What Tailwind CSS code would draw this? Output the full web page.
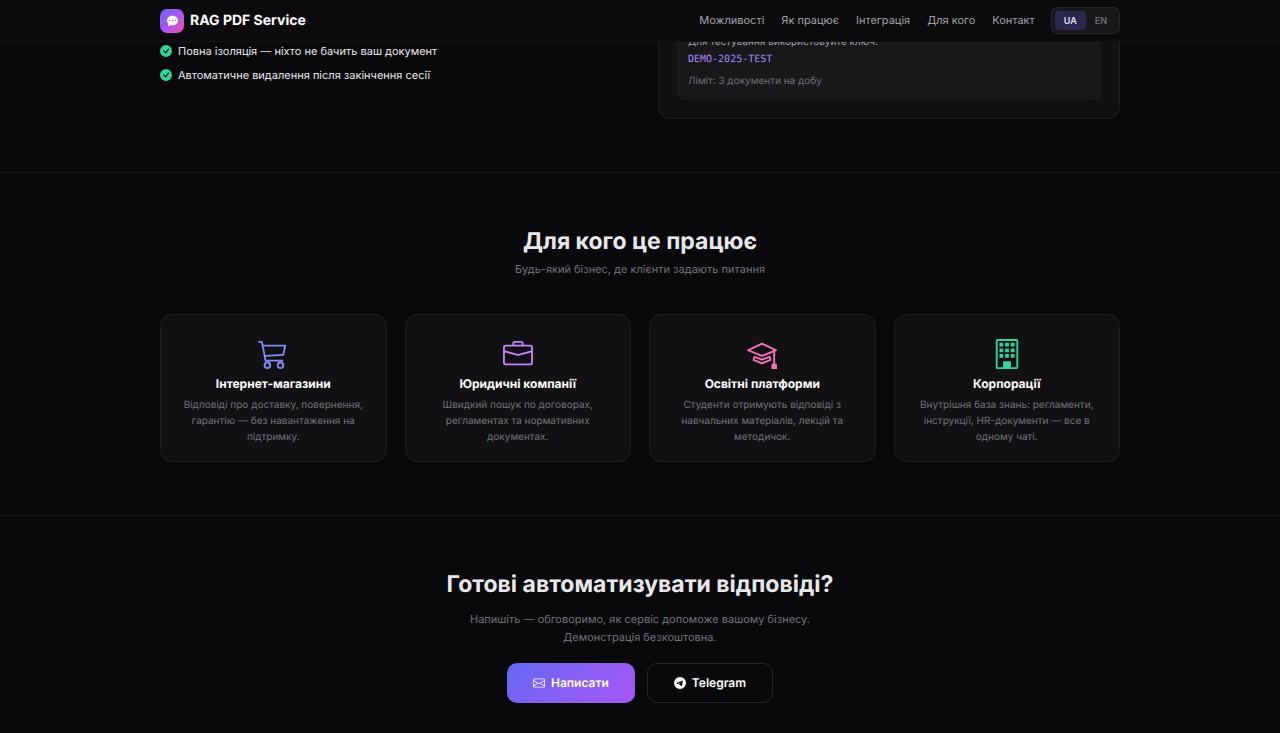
<!DOCTYPE html>
<html lang="uk">
<head>
    <meta charset="UTF-8">
    <meta name="viewport" content="width=device-width, initial-scale=1.0">
    <title>RAG PDF Service</title>
    <script src="https://cdn.jsdelivr.net/npm/@tailwindcss/browser@4"></script>
</head>
<body class="bg-[#09090b] text-[#e8e8ea] font-['Inter',sans-serif] text-xs [text-rendering:geometricPrecision] overflow-x-hidden">

    <!-- Header -->
    <header class="fixed top-0 inset-x-0 z-10 bg-[#0b0b0d] border-b border-[#141416]">
        <div class="max-w-[960px] mx-auto h-[41px] flex justify-between items-center">
            <a href="#" class="flex items-center gap-1.5 text-sm font-bold text-white">
                <span class="size-6 rounded-[7px] bg-linear-135 from-[#6366f1] via-[#a855f7] to-[#ec4899] flex items-center justify-center">
                    <svg class="size-[11px]" viewBox="0 0 16 16" fill="currentColor"><path d="M16 8c0 3.866-3.582 7-8 7a9 9 0 0 1-2.347-.306c-.584.296-1.925.864-4.181 1.234-.2.032-.352-.176-.273-.362.354-.836.674-1.95.77-2.966C.744 11.37 0 9.76 0 8c0-3.866 3.582-7 8-7s8 3.134 8 7M5 8a1 1 0 1 0-2 0 1 1 0 0 0 2 0m4 0a1 1 0 1 0-2 0 1 1 0 0 0 2 0m3 1a1 1 0 1 0 0-2 1 1 0 0 0 0 2"/></svg>
                </span>
                RAG PDF Service
            </a>
            <div class="flex items-center gap-4">
                <nav class="flex gap-[17px] text-[11px] text-[#a1a1aa]">
                    <a href="#features">Можливості</a>
                    <a href="#how">Як працює</a>
                    <a href="#integration">Інтеграція</a>
                    <a href="#audience">Для кого</a>
                    <a href="#contact">Контакт</a>
                </nav>
                <div class="flex rounded-md border border-[#262629] bg-[#18181b] p-[3px] text-[9px] leading-[19px] font-semibold">
                    <button type="button" class="rounded bg-[#2b2850] text-[#e4e4f5] px-[9px]">UA</button>
                    <button type="button" class="rounded text-[#6b6b73] px-[9px]">EN</button>
                </div>
            </div>
        </div>
    </header>

    <!-- Demo -->
    <section class="pb-[53px] border-b border-[#18181b]">
        <div class="max-w-[960px] mx-auto grid grid-cols-2 gap-9">
            <ul class="pt-[42px] space-y-1.5 text-[11px] leading-[18px] text-[#e8e8ea]">
                <li class="flex items-center gap-1.5">
                    <svg class="size-3 text-[#34d399]" viewBox="0 0 16 16" fill="currentColor"><path d="M16 8A8 8 0 1 1 0 8a8 8 0 0 1 16 0m-3.97-3.03a.75.75 0 0 0-1.08.022L7.477 9.417 5.384 7.323a.75.75 0 0 0-1.06 1.06L6.97 11.03a.75.75 0 0 0 1.079-.02l3.992-4.99a.75.75 0 0 0-.01-1.05z"/></svg>
                    Повна ізоляція — ніхто не бачить ваш документ
                </li>
                <li class="flex items-center gap-1.5">
                    <svg class="size-3 text-[#34d399]" viewBox="0 0 16 16" fill="currentColor"><path d="M16 8A8 8 0 1 1 0 8a8 8 0 0 1 16 0m-3.97-3.03a.75.75 0 0 0-1.08.022L7.477 9.417 5.384 7.323a.75.75 0 0 0-1.06 1.06L6.97 11.03a.75.75 0 0 0 1.079-.02l3.992-4.99a.75.75 0 0 0-.01-1.05z"/></svg>
                    Автоматичне видалення після закінчення сесії
                </li>
            </ul>
            <div class="rounded-b-xl border border-t-0 border-[#1f1f22] bg-[#111113] px-[18px] pb-[18px]">
                <div class="rounded-b-md bg-[#18181b] px-[11px] pt-[34px] pb-[11px] text-[10px] leading-4">
                    <p class="text-[#a1a1aa]">Для тестування використовуйте ключ:</p>
                    <code class="block mt-0.5 font-['DejaVu_Sans_Mono',monospace] text-[#a78bfa]">DEMO-2025-TEST</code>
                    <p class="mt-[5px] text-[#71717a]">Ліміт: 3 документи на добу</p>
                </div>
            </div>
        </div>
    </section>

    <!-- Audience -->
    <section id="audience" class="py-[53px] border-b border-[#18181b] text-center">
        <div class="max-w-[960px] mx-auto">
            <h2 class="text-[23px] leading-[30px] font-bold">Для кого це працює</h2>
            <p class="mt-1 text-[11px] leading-[18px] text-[#71717a]">Будь-який бізнес, де клієнти задають питання</p>
            <div class="mt-9 grid grid-cols-4 gap-[18px]">
                <article class="rounded-xl border border-[#1f1f22] bg-[#111113] px-[18px] pt-6 pb-4">
                    <svg class="size-[30px] mx-auto text-[#818cf8]" viewBox="0 0 16 16" fill="currentColor"><path d="M0 1.5A.5.5 0 0 1 .5 1H2a.5.5 0 0 1 .485.379L2.89 3H14.5a.5.5 0 0 1 .49.598l-1 5a.5.5 0 0 1-.465.401l-9.397.472L4.415 11H13a.5.5 0 0 1 0 1H4a.5.5 0 0 1-.491-.408L2.01 3.607 1.61 2H.5a.5.5 0 0 1-.5-.5M3.102 4l.84 4.479 9.144-.459L13.89 4zM5 12a2 2 0 1 0 0 4 2 2 0 0 0 0-4m7 0a2 2 0 1 0 0 4 2 2 0 0 0 0-4m-7 1a1 1 0 1 1 0 2 1 1 0 0 1 0-2m7 0a1 1 0 1 1 0 2 1 1 0 0 1 0-2"/></svg>
                    <h3 class="mt-1.5 leading-[18px] font-bold text-white">Інтернет-магазини</h3>
                    <p class="mt-1 text-[10px] leading-4 text-[#71717a]">Відповіді про доставку, повернення, гарантію — без навантаження на підтримку.</p>
                </article>
                <article class="rounded-xl border border-[#1f1f22] bg-[#111113] px-[18px] pt-6 pb-4">
                    <svg class="size-[30px] mx-auto text-[#c084fc]" viewBox="0 0 16 16" fill="currentColor"><path d="M6.5 1A1.5 1.5 0 0 0 5 2.5V3H1.5A1.5 1.5 0 0 0 0 4.5v8A1.5 1.5 0 0 0 1.5 14h13a1.5 1.5 0 0 0 1.5-1.5v-8A1.5 1.5 0 0 0 14.5 3H11v-.5A1.5 1.5 0 0 0 9.5 1zm0 1h3a.5.5 0 0 1 .5.5V3H6v-.5a.5.5 0 0 1 .5-.5m1.886 6.914L15 7.151V12.5a.5.5 0 0 1-.5.5h-13a.5.5 0 0 1-.5-.5V7.15l6.614 1.764a1.5 1.5 0 0 0 .772 0M1.5 4h13a.5.5 0 0 1 .5.5v1.616L8.129 7.948a.5.5 0 0 1-.258 0L1 6.116V4.5a.5.5 0 0 1 .5-.5"/></svg>
                    <h3 class="mt-1.5 leading-[18px] font-bold text-white">Юридичні компанії</h3>
                    <p class="mt-1 text-[10px] leading-4 text-[#71717a]">Швидкий пошук по договорах, регламентах та нормативних документах.</p>
                </article>
                <article class="rounded-xl border border-[#1f1f22] bg-[#111113] px-[18px] pt-6 pb-4">
                    <svg class="size-[30px] mx-auto text-[#f472b6]" viewBox="0 0 16 16" fill="currentColor"><path d="M8.211 2.047a.5.5 0 0 0-.422 0l-7.5 3.5a.5.5 0 0 0 .025.917l7.5 3a.5.5 0 0 0 .372 0L14 7.14V13a1 1 0 0 0-1 1v2h3v-2a1 1 0 0 0-1-1V6.739l.686-.275a.5.5 0 0 0 .025-.917zM8 8.46 1.758 5.965 8 3.052l6.242 2.913z"/><path d="M4.176 9.032a.5.5 0 0 0-.656.327l-.5 1.7a.5.5 0 0 0 .294.605l4.5 1.8a.5.5 0 0 0 .372 0l4.5-1.8a.5.5 0 0 0 .294-.605l-.5-1.7a.5.5 0 0 0-.656-.327L8 10.466zm-.068 1.873.22-.748 3.496 1.311a.5.5 0 0 0 .352 0l3.496-1.311.22.748L8 12.46z"/></svg>
                    <h3 class="mt-1.5 leading-[18px] font-bold text-white">Освітні платформи</h3>
                    <p class="mt-1 text-[10px] leading-4 text-[#71717a]">Студенти отримують відповіді з навчальних матеріалів, лекцій та методичок.</p>
                </article>
                <article class="rounded-xl border border-[#1f1f22] bg-[#111113] px-[18px] pt-6 pb-4">
                    <svg class="size-[30px] mx-auto text-[#34d399]" viewBox="0 0 16 16" fill="currentColor"><path d="M2 1a1 1 0 0 1 1-1h10a1 1 0 0 1 1 1v14a1 1 0 0 1-1 1H3a1 1 0 0 1-1-1zm11 0H3v14h3v-2.5a.5.5 0 0 1 .5-.5h3a.5.5 0 0 1 .5.5V15h3z"/><path d="M4 2h2v2H4zm3 0h2v2H7zm3 0h2v2h-2zM4 5h2v2H4zm3 0h2v2H7zm3 0h2v2h-2zM4 8h2v2H4zm3 0h2v2H7zm3 0h2v2h-2zM6 12h4v3H6z"/></svg>
                    <h3 class="mt-1.5 leading-[18px] font-bold text-white">Корпорації</h3>
                    <p class="mt-1 text-[10px] leading-4 text-[#71717a]">Внутрішня база знань: регламенти, інструкції, HR-документи — все в одному чаті.</p>
                </article>
            </div>
        </div>
    </section>

    <!-- Contact -->
    <section id="contact" class="py-[53px] text-center">
        <h2 class="text-[23px] leading-[30px] font-bold">Готові автоматизувати відповіді?</h2>
        <p class="mt-[11px] text-[11px] leading-[18px] text-[#71717a]">Напишіть — обговоримо, як сервіс допоможе вашому бізнесу.<br>Демонстрація безкоштовна.</p>
        <div class="mt-[17px] flex justify-center gap-3 font-semibold text-white">
            <a href="#write" class="h-10 px-[26px] rounded-[10px] bg-linear-135 from-[#6366f1] to-[#a855f7] flex items-center gap-1.5">
                <svg class="size-3" viewBox="0 0 16 16" fill="currentColor"><path d="M0 4a2 2 0 0 1 2-2h12a2 2 0 0 1 2 2v8a2 2 0 0 1-2 2H2a2 2 0 0 1-2-2zm2-1a1 1 0 0 0-1 1v.217l7 4.2 7-4.2V4a1 1 0 0 0-1-1zm13 2.383-4.708 2.825L15 11.105zm-.034 6.876-5.64-3.471L8 9.583l-1.326-.795-5.64 3.47A1 1 0 0 0 2 13h12a1 1 0 0 0 .966-.741M1 11.105l4.708-2.897L1 5.383z"/></svg>
                Написати
            </a>
            <a href="#telegram" class="h-10 px-[26px] rounded-[10px] border border-[#27272a] flex items-center gap-1.5">
                <svg class="size-3" viewBox="0 0 16 16" fill="currentColor"><path d="M16 8A8 8 0 1 1 0 8a8 8 0 0 1 16 0M8.287 5.906q-1.168.486-4.666 2.01-.567.225-.595.442c-.03.243.275.339.69.47l.175.055c.408.133.958.288 1.243.294q.39.01.868-.32 3.269-2.206 3.374-2.23c.05-.012.12-.026.166.016s.042.12.037.141c-.03.129-1.227 1.241-1.846 1.817-.193.18-.33.307-.358.336a8 8 0 0 1-.188.186c-.38.366-.664.64.015 1.088.327.216.589.393.85.571.284.194.568.387.936.629q.14.092.27.187c.331.236.63.448.997.414.214-.02.435-.22.547-.82.265-1.417.786-4.486.906-5.751a1.4 1.4 0 0 0-.013-.315.34.34 0 0 0-.114-.217.53.53 0 0 0-.31-.093c-.3.005-.763.166-2.984 1.09"/></svg>
                Telegram
            </a>
        </div>
    </section>

</body>
</html>
